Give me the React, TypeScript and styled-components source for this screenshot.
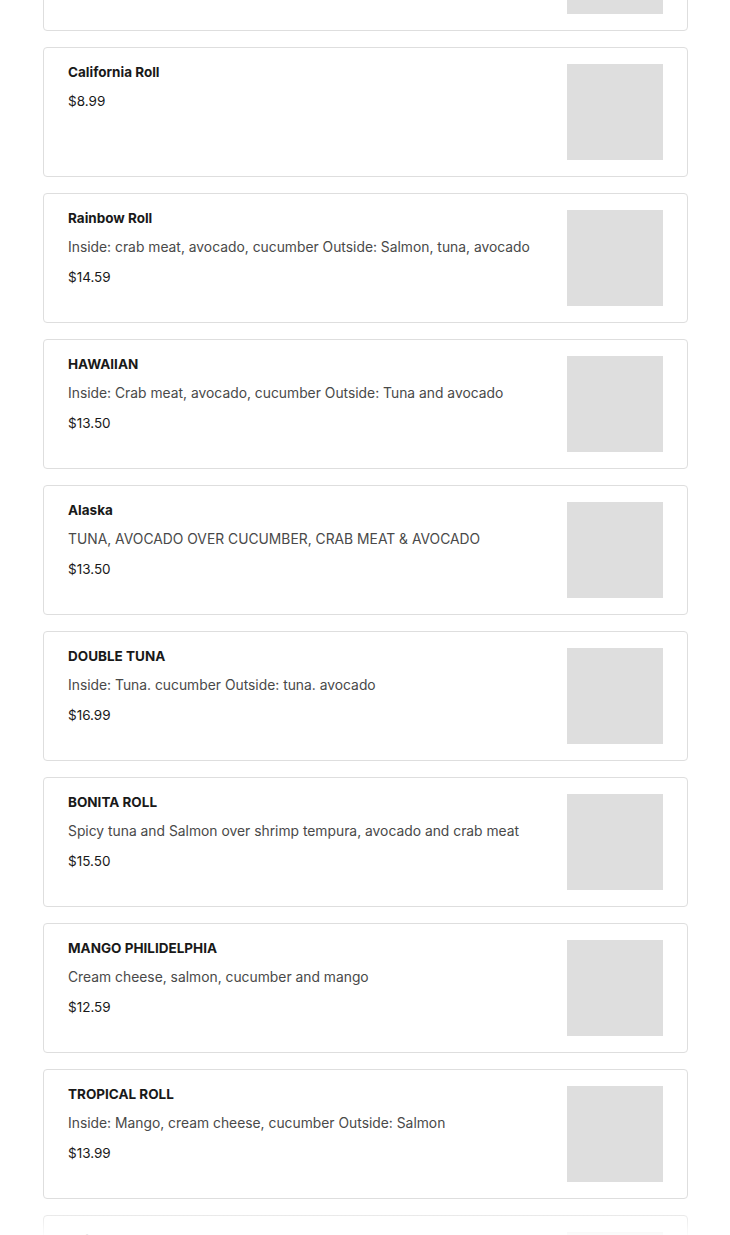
import React from "react";
import styled, { createGlobalStyle } from "styled-components";

const GlobalStyle = createGlobalStyle`
  html, body {
    margin: 0;
    padding: 0;
    background: #ffffff;
    overflow: hidden;
  }
  body {
    font-family: Inter, "Noto Sans", sans-serif;
    -webkit-font-smoothing: antialiased;
  }
`;

const Page = styled.div`
  width: 730px;
  height: 1235px;
  overflow: hidden;
  position: relative;
  box-sizing: border-box;
  padding: 0 42px 0 43px;
`;

const List = styled.div`
  display: flex;
  flex-direction: column;
  gap: 16px;
  margin-top: -99px;
`;

const Card = styled.div`
  box-sizing: border-box;
  height: 130px;
  border: 1px solid #dedede;
  border-radius: 4px;
  padding: 16px 24px 16px 24px;
  display: flex;
  justify-content: space-between;
  gap: 24px;
  background: #fff;
`;

const Info = styled.div`
  display: flex;
  flex-direction: column;
  gap: 10px;
  min-width: 0;
`;

const Title = styled.div`
  font-size: 13.5px;
  font-weight: 700;
  line-height: 16px;
  margin-bottom: 1px;
  color: #191919;
`;

const Desc = styled.div`
  font-size: 13.85px;
  font-weight: 400;
  line-height: 20px;
  color: #494949;
`;

const Price = styled.div`
  font-size: 13.5px;
  font-weight: 400;
  line-height: 20px;
  color: #191919;
`;

const Thumb = styled.div`
  flex: 0 0 96px;
  width: 96px;
  height: 96px;
  background: #dedede;
`;

const Fade = styled.div`
  position: absolute;
  left: 0;
  right: 0;
  bottom: 0;
  height: 32px;
  background: linear-gradient(
    to bottom,
    rgba(255, 255, 255, 0) 0%,
    rgba(255, 255, 255, 0.9) 100%
  );
  pointer-events: none;
`;

type Item = { title: string; desc?: string; price: string };

const items: Item[] = [
  { title: "Philadelphia Roll", desc: "Salmon, cream cheese, cucumber", price: "$8.99" },
  { title: "California Roll", price: "$8.99" },
  {
    title: "Rainbow Roll",
    desc: "Inside: crab meat, avocado, cucumber Outside: Salmon, tuna, avocado",
    price: "$14.59",
  },
  {
    title: "HAWAIIAN",
    desc: "Inside: Crab meat, avocado, cucumber Outside: Tuna and avocado",
    price: "$13.50",
  },
  {
    title: "Alaska",
    desc: "TUNA, AVOCADO OVER CUCUMBER, CRAB MEAT & AVOCADO",
    price: "$13.50",
  },
  {
    title: "DOUBLE TUNA",
    desc: "Inside: Tuna. cucumber Outside: tuna. avocado",
    price: "$16.99",
  },
  {
    title: "BONITA ROLL",
    desc: "Spicy tuna and Salmon over shrimp tempura, avocado and crab meat",
    price: "$15.50",
  },
  {
    title: "MANGO PHILIDELPHIA",
    desc: "Cream cheese, salmon, cucumber and mango",
    price: "$12.59",
  },
  {
    title: "TROPICAL ROLL",
    desc: "Inside: Mango, cream cheese, cucumber Outside: Salmon",
    price: "$13.99",
  },
  { title: "Spider Roll", desc: "Soft shell crab, avocado, cucumber", price: "$13.99" },
];

export default function App() {
  return (
    <>
      <GlobalStyle />
      <Page>
        <List>
          {items.map((it, i) => (
            <Card key={i}>
              <Info>
                <Title>{it.title}</Title>
                {it.desc && <Desc>{it.desc}</Desc>}
                <Price>{it.price}</Price>
              </Info>
              <Thumb />
            </Card>
          ))}
        </List>
        <Fade />
      </Page>
    </>
  );
}
